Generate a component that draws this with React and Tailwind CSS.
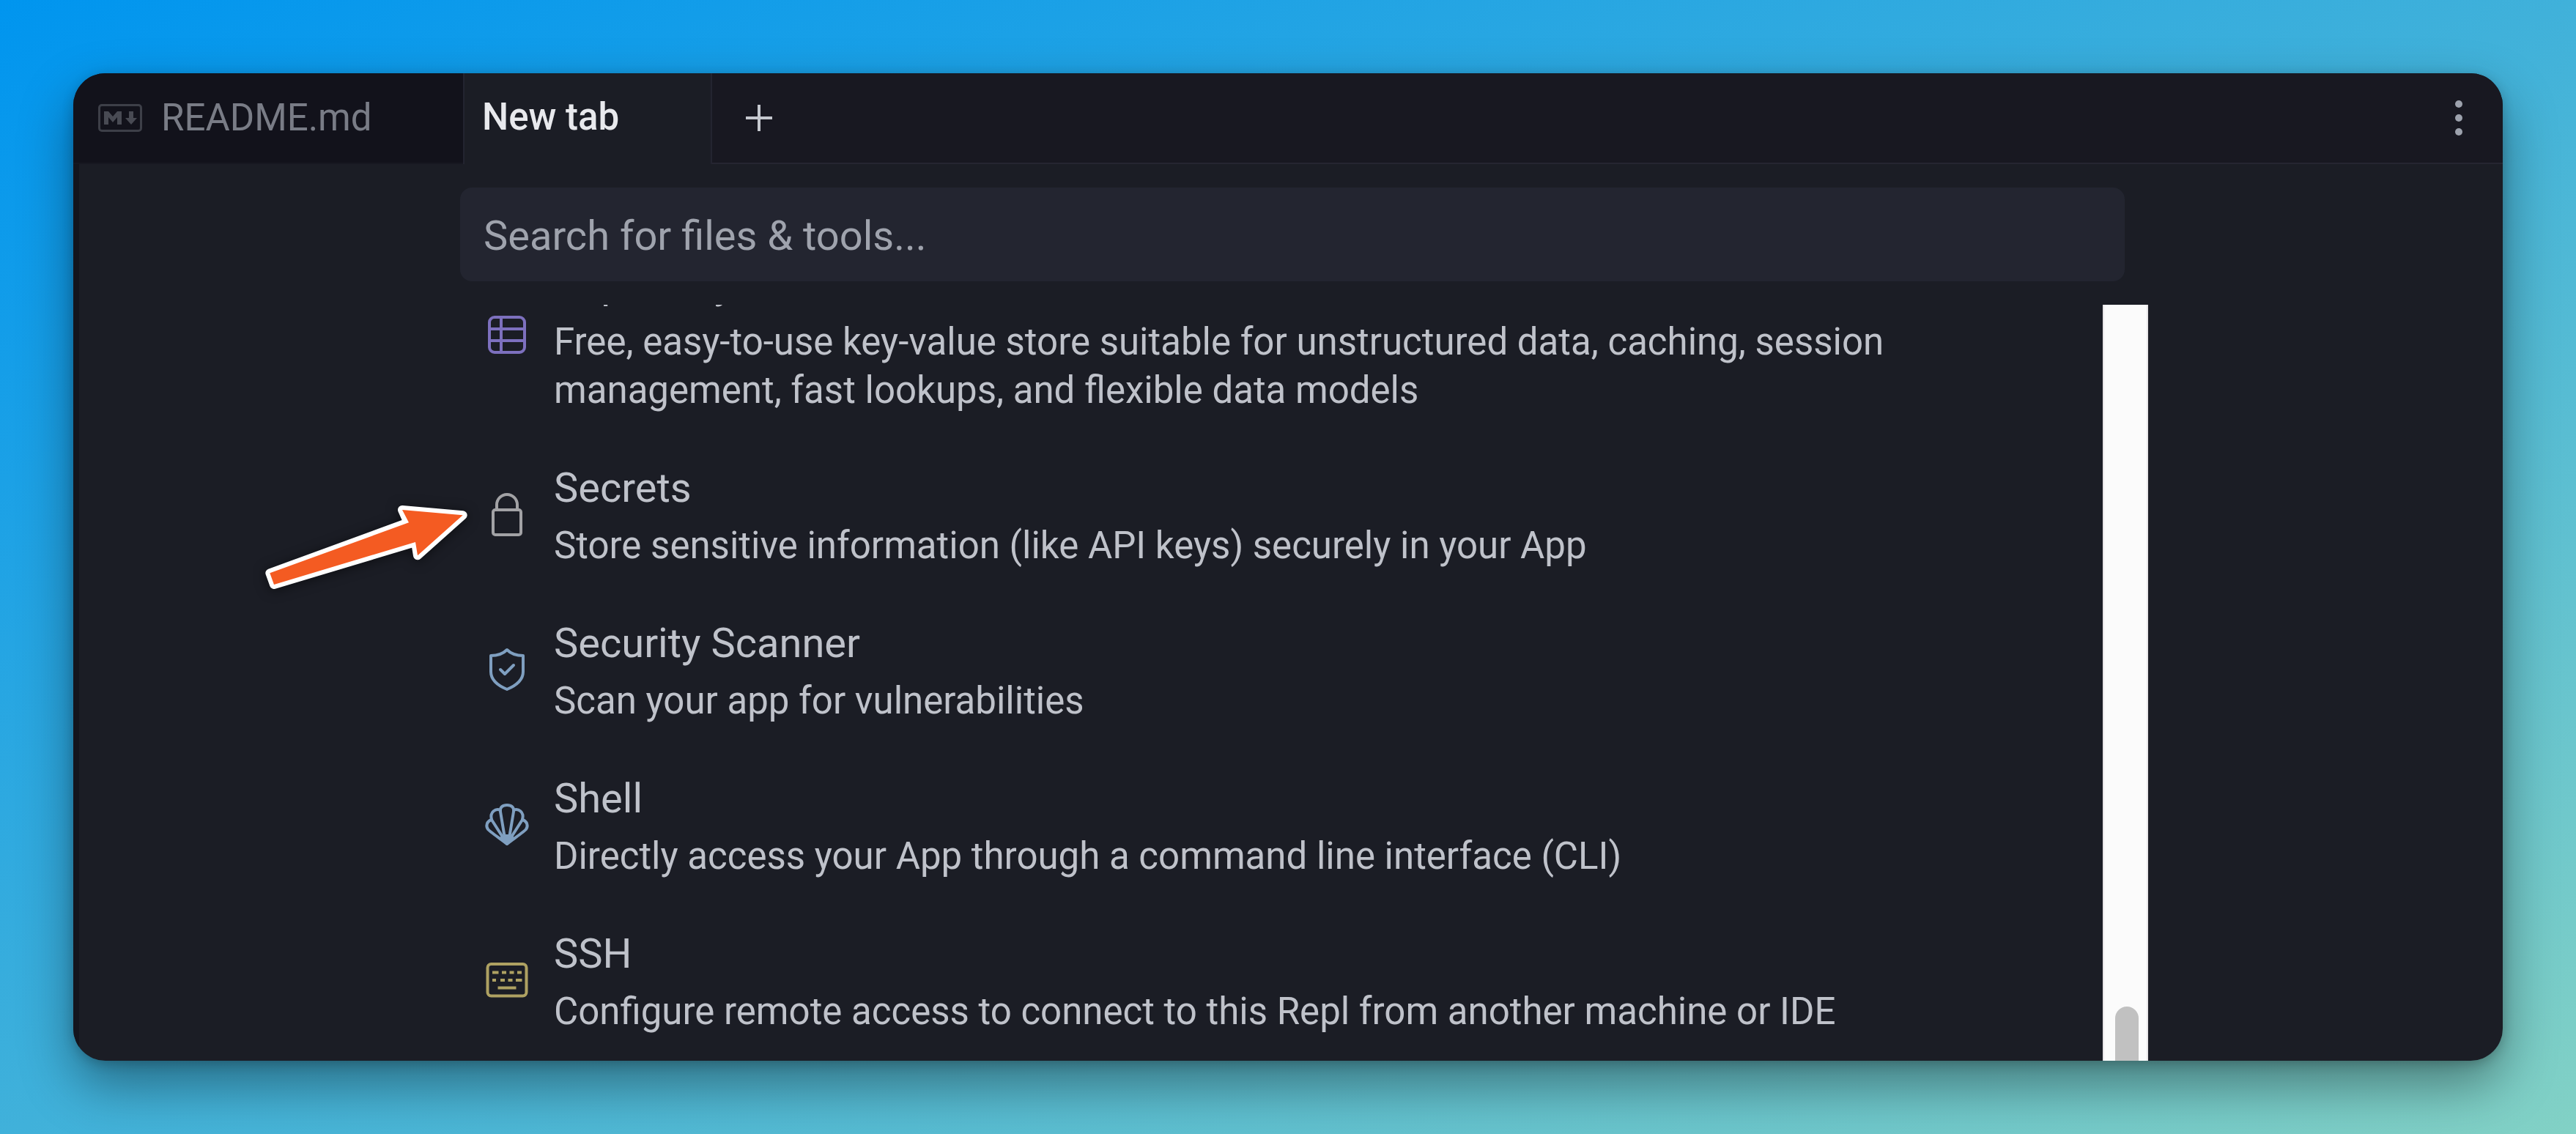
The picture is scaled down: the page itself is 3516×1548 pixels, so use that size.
import React from "react";

function MarkdownIcon() {
  return (
    <svg width="60" height="38" viewBox="0 0 60 38" fill="none" aria-hidden="true">
      <rect x="1.5" y="1.5" width="57" height="35" rx="3.5" stroke="#3d3f48" strokeWidth="3" />
      <path d="M8 28V10h6l6 7 6-7h6v18h-6V18l-6 7-6-7v10z" fill="#484a53" />
      <path d="M42 10h6v9h5l-8 9-8-9h5z" fill="#484a53" />
    </svg>
  );
}

function Icon({ color, children }) {
  return (
    <svg
      width="64"
      height="64"
      viewBox="0 0 64 64"
      fill="none"
      stroke={color}
      strokeWidth="4"
      strokeLinecap="round"
      strokeLinejoin="round"
      className="shrink-0"
      aria-hidden="true"
    >
      {children}
    </svg>
  );
}

const tools = [
  {
    name: "Replit Key-Value Store",
    text: "Free, easy-to-use key-value store suitable for unstructured data, caching, session management, fast lookups, and flexible data models",
    icon: (
      <Icon color="#7d70be">
        <rect x="8" y="8" width="48" height="48" rx="7" />
        <path d="M24 8v48M8 24h48M8 40h48" />
      </Icon>
    ),
  },
  {
    name: "Secrets",
    text: "Store sensitive information (like API keys) securely in your App",
    icon: (
      <Icon color="#a2a2a5">
        <rect x="13" y="26" width="38" height="34" rx="3" />
        <path d="M18 26v-7a14 14 0 0 1 28 0v7" />
      </Icon>
    ),
  },
  {
    name: "Security Scanner",
    text: "Scan your app for vulnerabilities",
    icon: (
      <Icon color="#7f9fc0">
        <path d="M32 5C26 11 18 13 10 13V35C10 47 20 54 32 59C44 54 54 47 54 35V13C46 13 38 11 32 5Z" />
        <path d="M23 32l6 6L41 26" />
      </Icon>
    ),
  },
  {
    name: "Shell",
    text: "Directly access your App through a command line interface (CLI)",
    icon: (
      <Icon color="#7f9fc0">
        <path d="M29 50L23 14C22 8 26 5 32 5s10 3 9 9L35 50" />
        <path d="M23 12C17 9 8 14 11 25L27 50" />
        <path d="M41 12C47 9 56 14 53 25L37 50" />
        <path d="M11 25C4 27 3 34 6 38C8 41 26 53 32 58" />
        <path d="M53 25C60 27 61 34 58 38C56 41 38 53 32 58" />
        <path d="M24 50l4-3h8l4 3-8 7z" fill="#7f9fc0" />
      </Icon>
    ),
  },
  {
    name: "SSH",
    text: "Configure remote access to connect to this Repl from another machine or IDE",
    icon: (
      <Icon color="#aea162">
        <rect x="5.5" y="10" width="53" height="43.5" rx="5" />
        <path
          d="M12 21.5h8.500M25 21.500h6M35.500 21.500h6M46 21.500h6M12 32h5M23 32h6M33.500 32h6M44 32h8.500M19.500 42.500h25"
          strokeLinecap="butt"
        />
      </Icon>
    ),
  },
];

function Arrow() {
  return (
    <svg
      width="320"
      height="160"
      viewBox="0 0 960 480"
      className="pointer-events-none absolute left-[240px] top-[560px] overflow-visible drop-shadow-[0_2px_8px_rgba(0,0,0,0.5)]"
      aria-hidden="true"
    >
      <path
        d="M85 367L650 160L627 108L875 130L690 295L681 240L102 414Z"
        fill="#fff"
        stroke="#fff"
        strokeWidth="36"
        strokeLinejoin="round"
      />
      <path d="M85 367L654 160L627 108L875 130L690 295L681 240L102 414Z" fill="#f45b22" />
    </svg>
  );
}

export default function App() {
  return (
    <div className="flex h-screen bg-[linear-gradient(to_bottom_right,#0095ef,#40b1da_50%,#82d1c5)] p-[100px] font-['Roboto',sans-serif]">
      <main className="relative flex min-w-0 flex-1 flex-col overflow-hidden rounded-[44px] bg-[#1b1d25] shadow-[0_4px_16px_rgba(0,0,0,0.2),0_32px_72px_rgba(0,0,0,0.4)]">
        <div role="tablist" className="flex h-[124px] shrink-0 text-[51px] leading-[66px]">
          <button
            role="tab"
            aria-selected="false"
            className="flex w-[532px] items-center gap-[26px] border-b-2 border-[#171821] bg-[#12121b] pl-[34px] text-[#797c86]"
          >
            <MarkdownIcon />
            README.md
          </button>
          <button
            role="tab"
            aria-selected="true"
            className="w-[340px] border-x-2 border-[#232430] pb-1 pl-6 text-left font-medium text-[#e8e9ed]"
          >
            New tab
          </button>
          <div className="flex flex-1 items-center justify-between border-b-2 border-[#252531] bg-[#181821] pl-8 pr-7">
            <button aria-label="Open a new tab" className="flex size-16 items-center justify-center">
              <svg width="36" height="36" viewBox="0 0 36 36" stroke="#c5c8cf" strokeWidth="4" aria-hidden="true">
                <path d="M18 0v36M0 18h36" />
              </svg>
            </button>
            <button aria-label="More options" className="flex size-16 items-center justify-center">
              <svg width="10" height="48" viewBox="0 0 10 48" fill="#9da2ad" aria-hidden="true">
                <circle cx="5" cy="5" r="5" />
                <circle cx="5" cy="24" r="5" />
                <circle cx="5" cy="43" r="5" />
              </svg>
            </button>
          </div>
        </div>

        <div className="flex min-h-0 flex-1 border-l-8 border-[#14151d]">
          <div className="mx-auto flex w-full max-w-[2340px] flex-col pt-8">
            <div className="pl-9 pr-8">
              <input
                type="text"
                aria-label="Search for files and tools"
                placeholder="Search for files & tools..."
                className="h-32 w-full rounded-2xl bg-[#232530] px-8 pt-1 text-[56px] text-[#c0c3cb] outline-none placeholder:text-[#9fa3ad]"
              />
            </div>
            <div className="mt-8 flex min-h-0 flex-1">
              <div className="min-w-0 flex-1 overflow-hidden">
                <ul className="-mt-[98px]">
                  {tools.map((tool) => (
                    <li key={tool.name}>
                      <button className="flex w-full items-center gap-8 py-[30px] pl-[68px] pr-[120px] text-left text-[#bfc2ca]">
                        {tool.icon}
                        <span className="flex flex-col gap-[10px] pt-1">
                          <span className="text-[56px] leading-[72px]">{tool.name}</span>
                          <span className="text-[51px] leading-[66px]">{tool.text}</span>
                        </span>
                      </button>
                    </li>
                  ))}
                </ul>
              </div>
              <div className="flex w-[62px] shrink-0 flex-col items-center justify-end border-x-2 border-[#e8e6e8] bg-[#fbfbfb] pl-1">
                <div className="h-[74px] w-8 rounded-t-full bg-[#c1c1c1]" />
              </div>
            </div>
          </div>
        </div>
        <Arrow />
      </main>
    </div>
  );
}
